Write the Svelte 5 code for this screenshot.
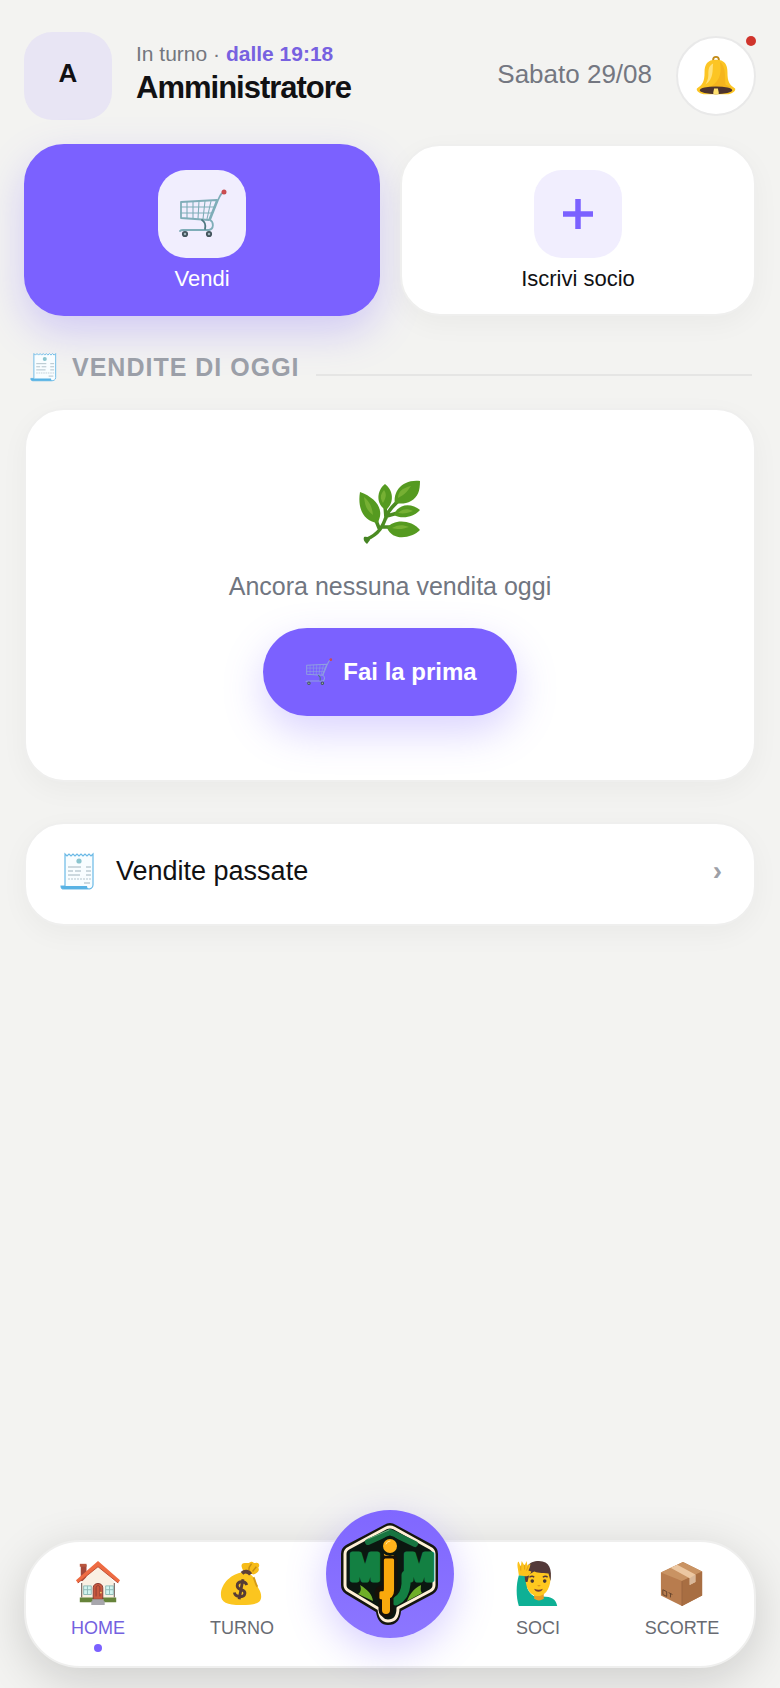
<script>
  let user = 'Amministratore';
  let since = '19:18';
  let today = 'Sabato 29/08';

  let active = 'HOME';
  let leftTabs = [
    { label: 'HOME', icon: 'house' },
    { label: 'TURNO', icon: 'money' }
  ];
  let rightTabs = [
    { label: 'SOCI', icon: 'member' },
    { label: 'SCORTE', icon: 'box' }
  ];
</script>

{#snippet cart(small)}
  <svg viewBox="0 0 50 50" fill="none" stroke={small ? '#8f9fe0' : '#7fadb8'} stroke-width="1.8" stroke-linecap="round" stroke-linejoin="round" aria-hidden="true">
    <path d="M3 13 39 11 31 31 3 29Z" />
    <path d="M3 18h34M3 24h31M9 13v16M15 13v16M21 12l-1 18M27 12l-2 18M33 12l-4 18" stroke-width="1.1" />
    <path d="M46 3c-4 1-4 5-6 8l-8 20c4 2 4 9-1 10H5c-2 0-2 0-3 1" />
    <path d="M24 31c3 2 4 5 3 9" stroke="#4d7780" />
    <circle cx="46" cy="3" r="1.6" fill="#d9534f" stroke="#c84b50" />
    <circle cx="7" cy="45" r="2.2" fill="#9fb4bb" stroke="#43545c" />
    <circle cx="31" cy="45" r="2.2" fill="#9fb4bb" stroke="#43545c" />
  </svg>
{/snippet}

{#snippet receipt()}
  <svg viewBox="0 0 36 38" fill="none" aria-hidden="true">
    <path d="M5 2l2 2 2-2 2 2 2-2 2 2 2-2 2 2 2-2 2 2 2-2 2 2 2-2 2 2 2-2v31c0 3-3 4-5 4H4c-2 0-3-1-3-3h4z" fill="#f8fdff" stroke="#6ab9e6" stroke-width="1.2" />
    <path d="M1 34h26c0 2 1 3 3 3H4c-2 0-3-1-3-3z" fill="#57b2e4" />
    <circle cx="19" cy="9" r="2.6" fill="#8ac5cf" />
    <path d="M8 15h13M26 15h5M8 19h5M15 19h6M26 19h5M8 23h12M26 23h5M24 31h6" stroke="#a0b4be" stroke-width="1" />
    <path d="M8 27h23" stroke="#b4c5cd" stroke-width="1" stroke-dasharray="2 1" />
  </svg>
{/snippet}

{#snippet tabIcon(name)}
  {#if name === 'house'}
    <svg viewBox="0 0 48 48" aria-hidden="true">
      <path d="M6 5h6v17H6z" fill="#a5483a" />
      <path d="M5 4h7v3H5z" fill="#b9563e" />
      <path d="M24 5 41 23v21H7V23z" fill="#faf0e3" />
      <path d="M5 39h38v5H5z" fill="#66833a" />
      <path d="M7 24v15M41 24v15" stroke="#5b4a45" />
      <path d="M24 1 1 21l2 3L24 7l21 17 2-3z" fill="#ee6b42" />
      <path d="M3 24 24 7l21 17" fill="none" stroke="#bd4c33" />
      <path d="M9 27h8v9H9zM32 27h8v9h-8z" fill="#d2f4ef" stroke="#8fbab7" />
      <path d="M13 27v9M9 31h8M36 27v9M32 31h8" stroke="#8fbab7" />
      <path d="M19 41V29c0-6 10-6 10 0v12z" fill="#c9583e" stroke="#873b32" />
      <path d="M22 38v-9c0-3 4-3 4 0v9" fill="none" stroke="#913e33" />
      <circle cx="27" cy="34" r="1" fill="#f4cb6b" />
      <path d="M18 41h12v2h1v4H17v-4h1z" fill="#a7a6ac" />
    </svg>
  {:else if name === 'money'}
    <svg viewBox="0 0 48 48" aria-hidden="true">
      <path d="M26 12c-3-4-4-9 1-9 2 0 3 1 6-1 3-1 3 2 5 1 4-1 5 3 3 5 2 3-1 6-5 7z" fill="#f6bb18" />
      <path d="M31 11c0-3 1-5 3-7M35 12l4-5" fill="none" stroke="#c48d14" stroke-width="1.5" />
      <path d="M24 13c8 0 12 3 14 10 2 6 6 9 6 15 0 7-6 9-21 9S2 44 2 36c0-12 12-22 22-23z" fill="#fbc51f" />
      <path d="M36 18c2 4 2 7 4 10" fill="none" stroke="#d49a17" stroke-width="2" />
      <path d="M24 14c3-3 7-2 9 1" fill="none" stroke="#5d4037" stroke-width="4" />
      <path d="M29 26c-2-5-10-4-10 1 0 5 9 3 8 8-1 5-10 4-11-1M25 20l-4 21" fill="none" stroke="#573c35" stroke-width="3" />
    </svg>
  {:else if name === 'member'}
    <svg viewBox="0 0 48 48" aria-hidden="true">
      <path d="M4 16h8l1 14c4 8 9 10 16 8 9 0 14 3 15 10H4C1 38 1 26 4 16z" fill="#0eb095" />
      <path d="M20 34h10v6c-2 3-8 3-10 0z" fill="#e79e24" />
      <path d="M11 20c0-12 5-16 14-16 9 0 13 7 12 16-1 23-25 24-26 0z" fill="#ffc81f" />
      <path d="M11 23C8 8 14 1 25 1c11 0 14 9 12 21l-2-8c-7 0-13-1-15-2l-5 3-2 8z" fill="#543a3a" />
      <path d="M4 16 3 9c-1-5 0-8 1-7l2 5 1-6 3 5 2-5 1 5 3-2c0 3-1 5-2 7l3 1c-1 4-3 5-6 5z" fill="#fcc21b" />
      <path d="M6 6v5M10 5v5M14 6l-2 5" stroke="#df9e16" />
      <circle cx="18" cy="22" r="1.9" fill="#463734" />
      <circle cx="31" cy="22" r="1.9" fill="#463734" />
      <path d="M15 18q3-2 5 0M29 18q3-2 5 0" fill="none" stroke="#543a3a" stroke-width="1.500" />
      <path d="M23 26h4l-2 2z" fill="#df9820" />
      <path d="M20 30q5 2 9 0-1 3-4.500 3T20 30z" fill="#743d32" />
    </svg>
  {:else}
    <svg viewBox="0 0 48 48" aria-hidden="true">
      <path d="M2 13 25 2l20 10v25L24 48 2 37z" fill="#b87c4e" />
      <path d="M2 13 25 2l20 10-21 10z" fill="#c99363" />
      <path d="M24 22 45 12v25L24 48z" fill="#a86e42" />
      <path d="M12 8 19 5l19 10v8l-6 3v-7z" fill="#ecc7a1" />
      <path d="M32 19l6-4v8l-6 3z" fill="#d9b89a" />
      <path d="M24 22v26" stroke="#9b6540" />
      <path d="M4 31l4 2v5l-4-2zM10 34l4 2M12 35v4" fill="none" stroke="#65452d" />
    </svg>
  {/if}
{/snippet}

{#snippet tab(item)}
  <button class="tab" class:active={active === item.label} on:click={() => (active = item.label)}>
    <span class="tab-icon">{@render tabIcon(item.icon)}</span>
    <span>{item.label}</span>
    <span class="tab-dot"></span>
  </button>
{/snippet}

<div class="page">
  <header>
    <div class="avatar">{user[0]}</div>
    <div class="who">
      <p>In turno · <strong>dalle {since}</strong></p>
      <h1>{user}</h1>
    </div>
    <span class="date">{today}</span>
    <button class="bell" aria-label="Notifiche">
      <svg viewBox="0 0 44 44" aria-hidden="true">
        <circle cx="22" cy="5" r="3" fill="none" stroke="#c38b18" stroke-width="2" />
        <path d="M22 5c9 0 12 5 12 13 0 10 2 13 8 17 1 2-2 5-7 6H9c-5-1-8-4-7-6 6-4 8-7 8-17C10 10 13 5 22 5z" fill="#fcc524" />
        <path d="M26 7c7 5 5 18 6 24l6 3H15c9-5 14-13 11-27z" fill="#f5b51e" />
        <path d="M14 20c0-6 1-9 5-11-1 7 1 16-8 22 2-4 3-6 3-11z" fill="#ffe17a" />
        <ellipse cx="22" cy="37" rx="17" ry="4" fill="#4e342e" />
        <path d="M20 35h4l1 5c-1 2-5 2-6 0z" fill="#ffe070" />
      </svg>
      <span class="alert"></span>
    </button>
  </header>

  <main>
    <!-- Quick actions -->
    <div class="actions">
      <button class="tile primary">
        <span class="tile-icon cart">{@render cart(false)}</span>
        Vendi
      </button>
      <button class="tile">
        <span class="tile-icon plus">
          <svg viewBox="0 0 30 30" aria-hidden="true"><path d="M15 0v30M0 15h30" stroke="#7b61ff" stroke-width="5.500" /></svg>
        </span>
        Iscrivi socio
      </button>
    </div>

    <!-- Today's sales -->
    <h2><span class="title-icon">{@render receipt()}</span>VENDITE DI OGGI</h2>
    <section class="card empty">
      <svg class="leaf" viewBox="0 0 62 64" aria-hidden="true">
        <path d="M8 59C20 54 24 46 27 37S36 25 43 17M22 47h14M28 36l14-4M26 26l1 12M20 48l-4-10" fill="none" stroke="#4b8b22" stroke-width="3.500" stroke-linecap="round" />
        <path d="M1 12c11 4 19 11 20 19 1 5-1 8-2 12C6 42-2 30 1 12z" fill="#559a20" />
        <path d="M26 4c8 6 10 18 1 26-11-6-9-20-1-26z" fill="#559a20" />
        <path d="M61 1c0 10-2 16-9 20-5 3-11 3-16 2-2-10 6-24 25-22z" fill="#559a20" />
        <path d="M61 30c-7 8-19 9-26 5 4-12 18-12 26-5z" fill="#559a20" />
        <path d="M61 50c-8 8-27 12-33-2 6-9 24-9 33 2z" fill="#559a20" />
        <path d="M5 17c6 5 8 10 9 18-7-5-8-10-9-18zM25 10c-4 5-4 8-1 13 3-5 4-9 1-13zM52 6C43 8 39 12 39 18c6-3 9-6 13-12zM54 31c-6-3-11-2-15 2 6 1 10 0 15-2zM50 47c-7-3-12-2-17 1 7 2 11 1 17-1z" fill="#76b033" />
        <path d="M5 57c3-1 6 1 6 3l-3 4c-3-2-4-5-3-7z" fill="#458423" />
      </svg>
      <p>Ancora nessuna vendita oggi</p>
      <button class="first">
        <span class="first-icon">{@render cart(true)}</span>
        Fai la prima
      </button>
    </section>

    <a class="card past" href="#vendite">
      <span class="past-icon">{@render receipt()}</span>
      <span class="past-label">Vendite passate</span>
      <span class="chevron">›</span>
    </a>
  </main>

  <nav>
    {#each leftTabs as item}
      {@render tab(item)}
    {/each}
    <div class="center">
      <button class="logo" aria-label="MJM">
        <svg viewBox="0 0 100 106" stroke-linejoin="round" stroke-linecap="round" aria-hidden="true">
          <path d="M44 4q6-4 12 0l37 20q5 3 5 9v31q0 6-5 9L61 90q-1 14-13 14-10 0-12-13L6 73q-5-3-5-9V33q0-6 5-9z" fill="#15160f" />
          <path d="M46 7q4-2 8 0l36 20q4 2 4 6v31q0 4-4 6L58 87q0 13-10 13-8 0-9-12L9 70q-4-2-4-6V33q0-4 4-6z" fill="#0b1710" stroke="#fff0d6" stroke-width="3" />
          <path d="M28 21 50 11l25 12" fill="none" stroke="#177440" stroke-width="6" />
          <path d="M28 18 49 9" fill="none" stroke="#67a578" />
          <path d="M20 64c2 5 0 8-2 9l15 7c-1-7-5-11-13-16zM81 64c-8 4-11 9-14 16l15-8c-2-3-1-5-1-8z" fill="#6fae28" />
          <g class="letters">
            <text x="25" y="59" fill="#138042" stroke="#138042">M</text>
            <path d="M66 54v9q-1 13-10 17" fill="none" stroke="#138042" stroke-width="9" />
            <text x="79" y="59" fill="#138042" stroke="#138042">M</text>
            <path d="M50 39v29q-1 7-8 4M46 74v15" fill="none" stroke="#161109" stroke-width="15" />
            <text class="j" x="49" y="66" fill="#f9a90c" stroke="#f9a90c">j</text>
          </g>
          <path d="M46 74v15" fill="none" stroke="#f9a90c" stroke-width="8" />
          <circle cx="50" cy="25" r="10" fill="#0b1710" />
          <circle cx="50" cy="25" r="7" fill="#ffb31b" />
          <path d="M46 23q1-3 4-3" fill="none" stroke="#ffe5a0" />
        </svg>
      </button>
    </div>
    {#each rightTabs as item}
      {@render tab(item)}
    {/each}
  </nav>
</div>

<style>
  :global(body) {
    margin: 0;
    background: #f3f3f1;
  }

  .page {
    display: flex;
    flex-direction: column;
    box-sizing: border-box;
    min-height: 100vh;
    padding: 32px 24px 20px;
    font-family: 'Liberation Sans', Arial, sans-serif;
    color: #111113;
  }

  button {
    padding: 0;
    border: 0;
    font: inherit;
    color: inherit;
    cursor: pointer;
  }

  p,
  h1,
  h2 {
    margin: 0;
  }

  svg {
    display: block;
    width: 100%;
    overflow: visible;
  }

  header {
    display: flex;
    align-items: center;
    gap: 24px;
    margin-bottom: 24px;
  }

  .avatar {
    display: flex;
    align-items: center;
    justify-content: center;
    box-sizing: border-box;
    width: 88px;
    height: 88px;
    padding-bottom: 6px;
    border-radius: 28px;
    background: #e8e5f4;
    font-size: 26px;
    font-weight: bold;
  }

  .who {
    flex: 1;
    padding-bottom: 4px;
  }

  .who p {
    font-size: 21px;
    line-height: 28px;
    color: #74777f;
  }

  .who strong {
    color: #7761e0;
  }

  h1 {
    font-size: 31px;
    line-height: 40px;
    letter-spacing: -1px;
  }

  .date {
    padding-bottom: 4px;
    font-size: 26px;
    color: #747781;
  }

  .bell {
    position: relative;
    display: flex;
    align-items: center;
    justify-content: center;
    box-sizing: border-box;
    width: 80px;
    height: 80px;
    padding: 0 17px;
    border: 2px solid #e9e9e9;
    border-radius: 50%;
    background: #fff;
  }

  .alert {
    position: absolute;
    top: -2px;
    right: -2px;
    width: 10px;
    height: 10px;
    border-radius: 50%;
    background: #d0342c;
  }

  main {
    display: flex;
    flex-direction: column;
  }

  .actions {
    display: grid;
    grid-template-columns: 1fr 1fr;
    gap: 20px;
  }

  .tile {
    display: flex;
    flex-direction: column;
    align-items: center;
    gap: 6px;
    height: 172px;
    padding-top: 24px;
    border: 2px solid #efefee;
    border-radius: 40px;
    background: #fff;
    font-size: 22px;
    line-height: 30px;
    box-shadow: 0 8px 28px rgba(0, 0, 0, 0.04);
  }

  .tile.primary {
    border-color: #7b61ff;
    background: #7b61ff;
    color: #fff;
    box-shadow: 0 16px 40px rgba(123, 97, 255, 0.28);
  }

  .tile-icon {
    display: flex;
    align-items: center;
    justify-content: center;
    box-sizing: border-box;
    width: 88px;
    height: 88px;
    border-radius: 28px;
    background: #f1eefe;
  }

  .tile-icon.cart {
    padding: 0 18px 0 20px;
  }

  .tile-icon.plus {
    padding: 0 29px;
  }

  h2 {
    display: flex;
    align-items: center;
    margin: 33px 4px 23px 6px;
    font-size: 25px;
    line-height: 36px;
    letter-spacing: 1px;
    color: #9b9fa8;
  }

  h2::after {
    content: '';
    flex: 1;
    height: 2px;
    margin: 16px 0 0 16px;
    background: #e5e5e4;
  }

  .title-icon {
    width: 28px;
    margin-right: 14px;
  }

  .card {
    border: 2px solid #efefee;
    border-radius: 40px;
    background: #fff;
    box-shadow: 0 8px 28px rgba(0, 0, 0, 0.04);
  }

  .empty {
    display: flex;
    flex-direction: column;
    align-items: center;
    padding: 70px 24px 64px;
  }

  .leaf {
    width: 62px;
  }

  .empty p {
    margin: 24px 0;
    font-size: 25px;
    line-height: 36px;
    color: #717681;
  }

  .first {
    display: flex;
    align-items: center;
    gap: 10px;
    height: 88px;
    padding: 0 40px 0 42px;
    border-radius: 44px;
    background: #7b61ff;
    color: #fff;
    font-size: 24px;
    font-weight: bold;
    box-shadow: 0 16px 40px rgba(123, 97, 255, 0.28);
  }

  .first-icon {
    width: 28px;
  }

  .past {
    display: flex;
    align-items: center;
    margin-top: 40px;
    padding: 25px 32px 31px 34px;
    color: inherit;
    text-decoration: none;
  }

  .past-icon {
    width: 36px;
  }

  .past-label {
    flex: 1;
    margin-left: 20px;
    font-size: 27px;
    line-height: 44px;
  }

  .chevron {
    font-size: 28px;
    font-weight: bold;
    color: #9da0a7;
  }

  nav {
    display: grid;
    grid-template-columns: 1fr 1fr 152px 1fr 1fr;
    margin-top: auto;
    height: 124px;
    border: 2px solid #efefee;
    border-radius: 56px;
    background: #fff;
    box-shadow: 0 12px 48px rgba(0, 0, 0, 0.16);
  }

  .tab {
    display: flex;
    flex-direction: column;
    align-items: center;
    padding-top: 18px;
    background: none;
    font-size: 18px;
    line-height: 24px;
    color: #686b72;
  }

  .tab-icon {
    width: 46px;
    margin-bottom: 10px;
  }

  .tab-dot {
    width: 8px;
    height: 8px;
    margin-top: 4px;
    border-radius: 50%;
  }

  .active {
    color: #7461df;
  }

  .active .tab-dot {
    background: #7b61ff;
  }

  .center {
    display: flex;
    justify-content: center;
  }

  .logo {
    display: flex;
    flex-shrink: 0;
    align-items: center;
    justify-content: center;
    width: 128px;
    height: 128px;
    margin-top: -32px;
    padding: 0 14px;
    box-sizing: border-box;
    border-radius: 50%;
    background: linear-gradient(#8067ff, #8c76ff);
    box-shadow: 0 12px 40px rgba(123, 97, 255, 0.3);
  }

  .letters {
    font-size: 36px;
    font-weight: bold;
    text-anchor: middle;
  }

  .letters text {
    stroke-width: 5px;
  }

  .letters .j {
    font-size: 52px;
    stroke-width: 3px;
  }
</style>
